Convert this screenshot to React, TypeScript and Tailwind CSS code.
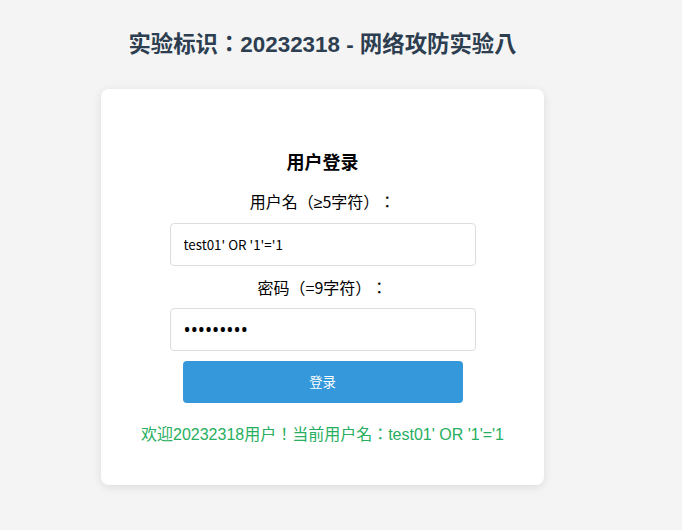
import React from "react";

export default function App() {
  return (
    <div className="min-h-[530px] w-[682px] bg-[#f4f4f4] font-['Liberation_Sans','Noto_Sans_CJK_JP',sans-serif] [text-spacing-trim:space-all]">
      <div className="ml-[101px] w-[443px] pt-[31px]">
        <h1 className="text-center text-[22.4px] font-bold leading-[28px] text-[#2c3e50]">
          实验标识：20232318 - 网络攻防实验八
        </h1>
        <div className="mt-[30px] flex h-[396px] flex-col items-center rounded-[8px] bg-white pt-[60px] shadow-[0_2px_10px_rgba(0,0,0,0.1)]">
          <h2 className="font-['Noto_Sans_CJK_JP',sans-serif] text-[18px] font-bold leading-[24px] text-black">
            用户登录
          </h2>
          <label className="mt-[17px] h-[22px] overflow-visible font-['Noto_Sans_CJK_JP',sans-serif] text-[16px] leading-[22px] text-black">
            用户名（<span className="font-['Liberation_Sans',sans-serif] leading-none">≥</span>5字符）：
          </label>
          <input
            className="mt-[11px] h-[43px] w-[306px] rounded-[4px] border border-[#dddddd] bg-white px-[13px] font-['Noto_Sans_CJK_JP',sans-serif] text-[13.33px] text-black outline-none"
            defaultValue="test01' OR '1'='1"
          />
          <label className="mt-[10px] h-[22px] font-['Noto_Sans_CJK_JP',sans-serif] text-[16px] leading-[22px] text-black">
            密码（=9字符）：
          </label>
          <input
            type="password"
            className="mt-[10px] h-[43px] w-[306px] rounded-[4px] border border-[#dddddd] bg-white px-[13px] font-['Noto_Sans',sans-serif] text-[19px] text-black outline-none"
            defaultValue="123456789"
          />
          <button className="mt-[10px] h-[42px] w-[280px] rounded-[4px] bg-[#3498db] font-['Noto_Sans_CJK_JP',sans-serif] text-[13.33px] text-white">
            登录
          </button>
          <p className="mt-[22px] text-[16px] leading-[20px] text-[#27ae60]">
            欢迎20232318用户！当前用户名：test01' OR '1'='1
          </p>
        </div>
      </div>
    </div>
  );
}
